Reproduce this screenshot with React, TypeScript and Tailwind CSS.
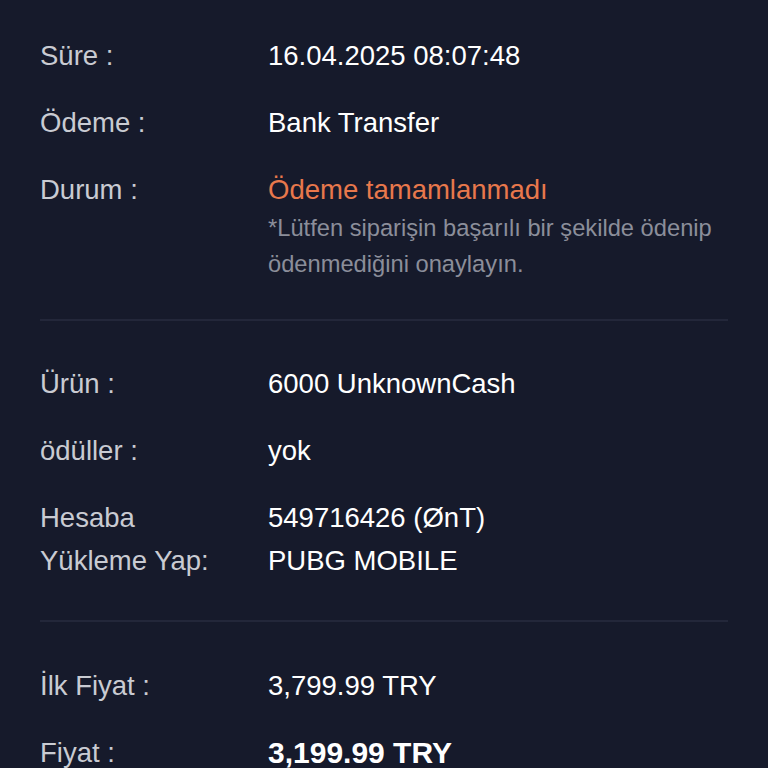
import React from "react";

const Row = ({ label, children }: { label: React.ReactNode; children: React.ReactNode }) => (
  <div className="grid grid-cols-[228px_1fr]">
    <div className="text-[#c9cbd2] text-[27.5px] leading-[43px]">{label}</div>
    <div className="text-white text-[27.5px] leading-[43px]">{children}</div>
  </div>
);

export default function App() {
  return (
    <div
      className="w-[768px] h-[768px] overflow-hidden bg-[#161a2b] px-10"
      style={{ fontFamily: '"Liberation Sans", Arial, sans-serif' }}
    >
      <div className="flex flex-col gap-6 pt-[34px] pb-[37px]">
        <Row label="Süre :">16.04.2025 08:07:48</Row>
        <Row label="Ödeme :">Bank Transfer</Row>
        <Row label="Durum :">
          <div className="text-[#e8784c]">Ödeme tamamlanmadı</div>
          <div className="text-[#8b8e9a] text-[23.7px] leading-[36px] -mt-[1px]">
            *Lütfen siparişin başarılı bir şekilde ödenip
            <br />
            ödenmediğini onaylayın.
          </div>
        </Row>
      </div>
      <div className="h-[2px] bg-[#23273a]" />
      <div className="flex flex-col gap-6 pt-[41px] pb-[38px]">
        <Row label="Ürün :">6000 UnknownCash</Row>
        <Row label="ödüller :">yok</Row>
        <Row
          label={
            <>
              Hesaba
              <br />
              Yükleme Yap:
            </>
          }
        >
          549716426 (ØnT)
          <br />
          PUBG MOBILE
        </Row>
      </div>
      <div className="h-[2px] bg-[#23273a]" />
      <div className="flex flex-col gap-6 pt-[42px]">
        <Row label="İlk Fiyat :">3,799.99 TRY</Row>
        <div className="grid grid-cols-[228px_1fr]">
          <div className="text-[#c9cbd2] text-[27.5px] leading-[43px]">Fiyat :</div>
          <div className="text-white text-[30px] leading-[43px] font-semibold">3,199.99 TRY</div>
        </div>
      </div>
    </div>
  );
}
